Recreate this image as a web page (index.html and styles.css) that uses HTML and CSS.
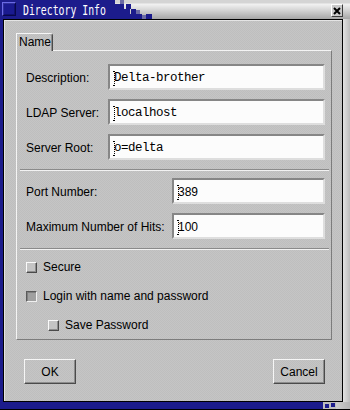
FILE: index.html
```html
<!DOCTYPE html>
<html>
<head>
<meta charset="utf-8">
<link rel="stylesheet" href="styles.css">
</head>
<body>
<div class="window">
  <div class="titlebar">
    <div class="title-blue">
      <span class="win-icon"></span>
      <span class="title-text">Directory Info</span>
    </div>
    <svg class="title-steps" width="45" height="19" viewBox="0 0 45 19">
      <g fill="#1c1c8c">
        <rect x="0" y="4" width="9" height="15"/>
        <rect x="9" y="9" width="6" height="10"/>
        <rect x="11" y="4" width="5" height="5"/>
        <rect x="16" y="9" width="5" height="5"/>
        <rect x="14" y="14" width="8" height="5"/>
        <rect x="22" y="14" width="5" height="5"/>
        <rect x="31" y="14" width="6" height="5"/>
      </g>
      <g fill="#6c6ca4">
        <rect x="5" y="0" width="4" height="4"/>
        <rect x="21" y="10" width="4" height="4"/>
        <rect x="27" y="15" width="4" height="4"/>
      </g>
    </svg>
    <div class="title-fill"></div>
    <div class="close-btn">
      <svg width="8" height="8" viewBox="0 0 8 8"><path d="M1 1L7 7M7 1L1 7" stroke="#000" stroke-width="2"/></svg>
    </div>
  </div>
  <div class="middle">
    <div class="lborder"></div>
    <div class="content">
      <div class="tabs"><div class="tab">Name</div></div>
      <div class="panel">
        <div class="form form-a">
          <span class="lbl">Description:</span>
          <div class="entry mono"><svg class="caret" width="3" height="15" viewBox="0 0 3 15"><g fill="#000"><rect x="0" y="0" width="2" height="1"/><rect x="1" y="2" width="1" height="1"/><rect x="1" y="4" width="1" height="1"/><rect x="1" y="6" width="1" height="1"/><rect x="1" y="8" width="1" height="1"/><rect x="1" y="10" width="1" height="1"/><rect x="1" y="12" width="1" height="1"/><rect x="0" y="14" width="2" height="1"/></g></svg><span>Delta-brother</span></div>
          <span class="lbl">LDAP Server:</span>
          <div class="entry mono"><svg class="caret" width="3" height="15" viewBox="0 0 3 15"><g fill="#000"><rect x="0" y="0" width="2" height="1"/><rect x="1" y="2" width="1" height="1"/><rect x="1" y="4" width="1" height="1"/><rect x="1" y="6" width="1" height="1"/><rect x="1" y="8" width="1" height="1"/><rect x="1" y="10" width="1" height="1"/><rect x="1" y="12" width="1" height="1"/><rect x="0" y="14" width="2" height="1"/></g></svg><span>localhost</span></div>
          <span class="lbl">Server Root:</span>
          <div class="entry mono"><svg class="caret" width="3" height="15" viewBox="0 0 3 15"><g fill="#000"><rect x="0" y="0" width="2" height="1"/><rect x="1" y="2" width="1" height="1"/><rect x="1" y="4" width="1" height="1"/><rect x="1" y="6" width="1" height="1"/><rect x="1" y="8" width="1" height="1"/><rect x="1" y="10" width="1" height="1"/><rect x="1" y="12" width="1" height="1"/><rect x="0" y="14" width="2" height="1"/></g></svg><span>o=delta</span></div>
        </div>
        <div class="sep sep-1"></div>
        <div class="form form-b">
          <span class="lbl">Port Number:</span>
          <div class="entry"><svg class="caret" width="3" height="15" viewBox="0 0 3 15"><g fill="#000"><rect x="0" y="0" width="2" height="1"/><rect x="1" y="2" width="1" height="1"/><rect x="1" y="4" width="1" height="1"/><rect x="1" y="6" width="1" height="1"/><rect x="1" y="8" width="1" height="1"/><rect x="1" y="10" width="1" height="1"/><rect x="1" y="12" width="1" height="1"/><rect x="0" y="14" width="2" height="1"/></g></svg><span>389</span></div>
          <span class="lbl">Maximum Number of Hits:</span>
          <div class="entry"><svg class="caret" width="3" height="15" viewBox="0 0 3 15"><g fill="#000"><rect x="0" y="0" width="2" height="1"/><rect x="1" y="2" width="1" height="1"/><rect x="1" y="4" width="1" height="1"/><rect x="1" y="6" width="1" height="1"/><rect x="1" y="8" width="1" height="1"/><rect x="1" y="10" width="1" height="1"/><rect x="1" y="12" width="1" height="1"/><rect x="0" y="14" width="2" height="1"/></g></svg><span>100</span></div>
        </div>
        <div class="sep sep-2"></div>
        <div class="checks">
          <div class="check"><span class="box"></span><span class="clbl">Secure</span></div>
          <div class="check"><span class="box box-on"></span><span class="clbl">Login with name and password</span></div>
          <div class="check check-sub"><span class="box"></span><span class="clbl">Save Password</span></div>
        </div>
      </div>
      <div class="buttons">
        <button class="btn">OK</button>
        <button class="btn">Cancel</button>
      </div>
    </div>
    <div class="rborder"></div>
  </div>
  <div class="bottombar">
    <div class="bb-blue"></div>
    <svg class="bb-steps" width="18" height="7" viewBox="0 0 18 7">
      <g fill="#1c1c8c">
        <rect x="0" y="0" width="5" height="7"/>
        <rect x="7" y="2" width="4" height="4"/>
        <rect x="13" y="1" width="4" height="4"/>
      </g>
    </svg>
    <div class="bb-gray"></div>
  </div>
</div>
</body>
</html>
```

FILE: styles.css
```css
* { box-sizing: border-box; }

body {
  margin: 0;
  font-family: "Liberation Sans", Arial, sans-serif;
  font-size: 12px;
  color: #000;
}

.window {
  width: 350px;
  height: 410px;
  display: flex;
  flex-direction: column;
  background: #1c1c8c;
  overflow: hidden;
}

/* ---------- title bar ---------- */
.titlebar {
  height: 19px;
  flex: none;
  display: flex;
  align-items: flex-start;
  background: linear-gradient(#d4d4d4 0, #d4d4d4 3px, #f2f2f2 4px, #dadada 9px, #a6a6a6 19px);
}

.title-blue {
  width: 115px;
  height: 19px;
  flex: none;
  display: flex;
  align-items: flex-start;
  background: #1c1c8c;
}

.win-icon {
  width: 14px;
  height: 14px;
  margin: 2px 0 0 2px;
  flex: none;
  border: 1px solid;
  border-color: #6a6ae6 #08084a #08084a #6a6ae6;
  background: #1a1a90;
  box-shadow: inset 1px 1px #30309c, inset -1px -1px #101070;
}

.title-text {
  flex: none;
  margin-left: 7px;
  padding-top: 2px;
  color: #fff;
  font-family: "DejaVu Sans Mono", monospace;
  font-size: 14px;
  line-height: 17px;
  white-space: nowrap;
  transform: scaleX(0.703);
  transform-origin: 0 0;
}

.title-steps { flex: none; display: block; }

.title-fill { flex: 1; }

.close-btn {
  width: 12px;
  height: 13px;
  margin: 4px 7px 0 0;
  flex: none;
  display: flex;
  align-items: center;
  justify-content: center;
  border: 1px solid;
  border-color: #ffffff #3c3c3c #3c3c3c #ffffff;
  background: #cacaca;
}

.close-btn svg { display: block; }

/* ---------- frame ---------- */
.middle {
  flex: 1;
  min-height: 0;
  display: flex;
}

.lborder {
  width: 3px;
  flex: none;
  background: #1c1c8c;
}

.rborder {
  width: 7px;
  flex: none;
  background: linear-gradient(to right, #e2e2e2, #bcbcbc);
}

.content {
  flex: 1;
  display: flex;
  flex-direction: column;
  padding: 13px 10px 0 12px;
  border: 1px solid #000;
  background: repeating-conic-gradient(#c5c5c5 0 25%, #bebebe 0 50%) 0 0 / 2px 2px;
  box-shadow: inset 1px 1px #e4e4e4;
}

/* ---------- tabs ---------- */
.tabs { display: flex; flex: none; }

.tab {
  height: 18px;
  margin-bottom: -1px;
  padding: 0 1px 0 2px;
  border: 1px solid;
  border-bottom: none;
  border-color: #f6f6f6 #4a4a4a transparent #f6f6f6;
  border-top-right-radius: 3px;
  line-height: 16px;
  background: repeating-conic-gradient(#c5c5c5 0 25%, #bebebe 0 50%) 0 0 / 2px 2px;
  box-shadow: inset -1px 0 #8c8c8c;
  position: relative;
  z-index: 1;
}

.panel {
  flex: none;
  height: 290px;
  display: flex;
  flex-direction: column;
  padding: 13px 6px 0 9px;
  border: 1px solid;
  border-color: #f4f4f4 #7c7c7c #7c7c7c #f4f4f4;
}

/* ---------- form rows ---------- */
.form {
  display: grid;
  row-gap: 9px;
}

.form-a { grid-template-columns: 82px 1fr; }
.form-b { grid-template-columns: 146px 1fr; }

.lbl {
  line-height: 24px;
  padding-top: 2px;
  white-space: nowrap;
}

.entry {
  height: 26px;
  display: flex;
  align-items: center;
  padding: 2px 0 0 3px;
  border: 2px solid;
  border-color: #868686 #dedede #dedede #868686;
  background: #fcfcfc;
  white-space: nowrap;
  overflow: hidden;
}

.entry.mono {
  font-family: "Liberation Mono", "Courier New", monospace;
  font-size: 12.5px;
  letter-spacing: -0.5px;
}

.caret {
  display: block;
  flex: none;
  margin-right: -2px;
}

.sep {
  flex: none;
  height: 2px;
  border-top: 1px solid #8a8a8a;
  border-bottom: 1px solid #f2f2f2;
  margin-left: -6px;
  margin-right: -4px;
}

.sep-1 { margin-top: 9px; margin-bottom: 7px; }
.sep-2 { margin-top: 9px; margin-bottom: 12px; }

/* ---------- check boxes ---------- */
.checks {
  display: flex;
  flex-direction: column;
  gap: 18px;
}

.check {
  height: 11px;
  display: flex;
  align-items: center;
  gap: 6px;
}

.check-sub { margin-left: 22px; }

.box {
  width: 11px;
  height: 11px;
  flex: none;
  border: 1px solid;
  border-color: #fafafa #4a4a4a #4a4a4a #fafafa;
  background: #c4c4c4;
  box-shadow: inset -1px -1px #8e8e8e;
}

.box-on {
  border-color: #5a5a5a #f0f0f0 #f0f0f0 #5a5a5a;
  background: #a0a0a0;
  box-shadow: inset 1px 1px #808080;
}

.clbl {
  line-height: 11px;
  white-space: nowrap;
}

/* ---------- buttons ---------- */
.buttons {
  display: flex;
  justify-content: space-between;
  padding: 19px 7px 0 8px;
}

.btn {
  width: 52px;
  height: 25px;
  padding: 0;
  border: 1px solid;
  border-color: #f6f6f6 #4a4a4a #4a4a4a #f6f6f6;
  box-shadow: inset -1px -1px #8c8c8c;
  background: transparent;
  font-family: "Liberation Sans", Arial, sans-serif;
  font-size: 12px;
  color: #000;
}

/* ---------- bottom frame ---------- */
.bottombar {
  height: 8px;
  flex: none;
  display: flex;
  border-bottom: 1px solid #000;
}

.bb-blue { flex: 1; background: #1c1c8c; }

.bb-steps {
  display: block;
  flex: none;
  background: #bdbdbd;
}

.bb-gray {
  width: 14px;
  flex: none;
  background: linear-gradient(to right, #cdcdcd, #b4b4b4);
}
```
